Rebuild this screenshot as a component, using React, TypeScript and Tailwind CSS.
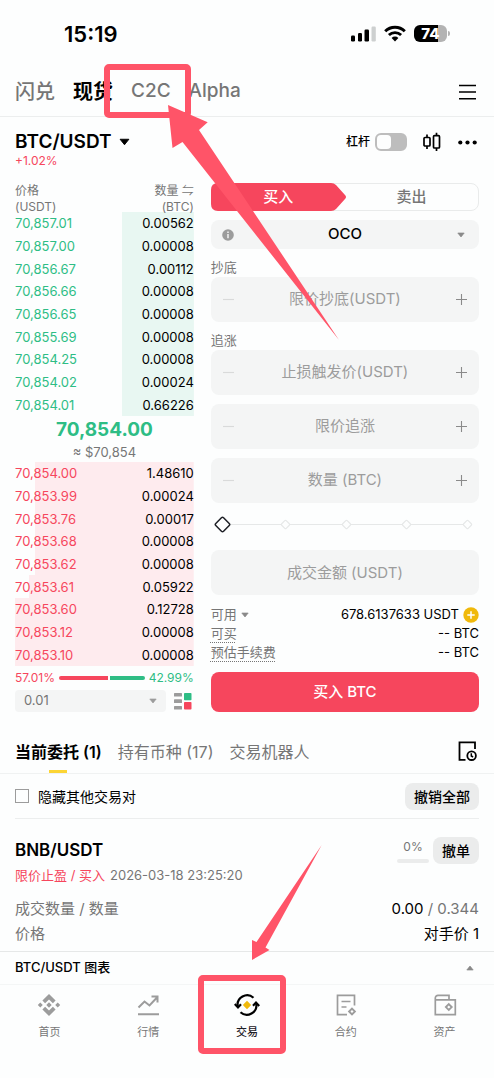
import type { ReactNode } from "react";

type Row = { price: string; amount: string; fill: number };

const upper: Row[] = [
  { price: "70,857.01", amount: "0.00562", fill: 40 },
  { price: "70,857.00", amount: "0.00008", fill: 40 },
  { price: "70,856.67", amount: "0.00112", fill: 40 },
  { price: "70,856.66", amount: "0.00008", fill: 40 },
  { price: "70,856.65", amount: "0.00008", fill: 40 },
  { price: "70,855.69", amount: "0.00008", fill: 40 },
  { price: "70,854.25", amount: "0.00008", fill: 40 },
  { price: "70,854.02", amount: "0.00024", fill: 40 },
  { price: "70,854.01", amount: "0.66226", fill: 40 },
];

const lower: Row[] = [
  { price: "70,854.00", amount: "1.48610", fill: 89 },
  { price: "70,853.99", amount: "0.00024", fill: 89 },
  { price: "70,853.76", amount: "0.00017", fill: 89 },
  { price: "70,853.68", amount: "0.00008", fill: 89 },
  { price: "70,853.62", amount: "0.00008", fill: 89 },
  { price: "70,853.61", amount: "0.05922", fill: 92 },
  { price: "70,853.60", amount: "0.12728", fill: 100 },
  { price: "70,853.12", amount: "0.00008", fill: 100 },
  { price: "70,853.10", amount: "0.00008", fill: 100 },
];

function Caret({ className }: { className: string }) {
  return (
    <svg viewBox="0 0 12 8" className={className} aria-hidden="true">
      <path d="M1.2 1h9.6L6 7z" fill="currentColor" stroke="currentColor" strokeWidth="1" strokeLinejoin="round" />
    </svg>
  );
}

function StatusBar() {
  return (
    <div className="flex h-[67px] items-center justify-between pr-11 pl-16">
      <span className="text-[22px] leading-6 font-semibold">15:19</span>
      <div className="flex items-center gap-2">
        <svg viewBox="0 0 25 17" className="h-[17px] w-[25px]" aria-hidden="true">
          <rect x="0" y="10.5" width="4" height="6" rx="1.2" />
          <rect x="7" y="8" width="4" height="8.5" rx="1.2" />
          <rect x="13.5" y="4.5" width="4.5" height="12" rx="1.2" />
          <rect x="20.5" y="1.5" width="4.3" height="15" rx="1.2" fill="#cdd0d0" />
        </svg>
        <svg viewBox="0 0 22 17" className="h-[17px] w-[22px]" aria-hidden="true">
          <path d="M1.2 6.2a14 14 0 0 1 19.6 0" fill="none" stroke="#000" strokeWidth="3" />
          <path d="M4.9 10a8.8 8.8 0 0 1 12.2 0" fill="none" stroke="#000" strokeWidth="2.8" />
          <path d="M11 16.6 7.6 13a4.8 4.8 0 0 1 6.8 0z" />
        </svg>
        <div className="flex items-center gap-px">
          <div className="flex h-[17px] w-[33px] items-center justify-center rounded-md bg-linear-to-r from-black from-74% to-[#b3b3b3] to-74% text-[15px] leading-4 font-extrabold text-white">
            74
          </div>
          <div className="h-[5px] w-0.5 rounded-r-full bg-[#b3b3b3]" />
        </div>
      </div>
    </div>
  );
}

function TopTabs() {
  return (
    <header className="flex h-[50px] items-center justify-between border-b border-[#eceeee] px-[15px]">
      <nav className="flex items-center gap-[18px] text-xl font-medium text-[#767676]">
        <a href="#convert">闪兑</a>
        <a href="#spot" className="font-bold text-black">现货</a>
        <a href="#c2c" className="text-[19px]">C2C</a>
        <a href="#alpha" className="text-[19px]">Alpha</a>
      </nav>
      <button type="button" aria-label="菜单" className="pr-[3px]">
        <svg viewBox="0 0 17 16" className="h-4 w-[17px]" aria-hidden="true">
          <path d="M0 1.5h17M0 8h17M0 14.7h17" stroke="#000" strokeWidth="1.6" />
        </svg>
      </button>
    </header>
  );
}

function PairHeader() {
  return (
    <div className="px-[15px] pt-3 pb-4">
      <div className="flex h-[26px] items-center justify-between">
        <button type="button" className="flex items-center gap-[7px] text-[19px] leading-6 font-semibold">
          BTC/USDT
          <Caret className="h-2 w-[11px]" />
        </button>
        <div className="flex items-center">
          <label htmlFor="margin" className="mr-[5px] text-[12px] leading-4 font-medium">杠杆</label>
          <input
            id="margin"
            type="checkbox"
            className="h-[18px] w-8 appearance-none rounded-md border-2 border-[#bdbdbd] bg-[#bdbdbd] before:block before:h-3.5 before:w-3.5 before:rounded before:bg-[#fdfefe]"
          />
          <button type="button" aria-label="K线" className="ml-4">
            <svg viewBox="0 0 18 20" className="h-5 w-[18px]" fill="none" stroke="#000" strokeWidth="1.7" aria-hidden="true">
              <path d="M4 2.500v3M4 14v3M13.500.8v3M13.500 16v3" />
              <rect x="1" y="5.500" width="6" height="8.500" rx="1" />
              <rect x="10.500" y="3.700" width="6" height="12.300" rx="1" />
            </svg>
          </button>
          <button type="button" aria-label="更多" className="ml-[17px] mr-[2px]">
            <svg viewBox="0 0 19 5" className="h-[5px] w-[19px]" aria-hidden="true">
              <circle cx="2.300" cy="2.500" r="2.100" />
              <circle cx="9.500" cy="2.500" r="2.100" />
              <circle cx="16.700" cy="2.500" r="2.100" />
            </svg>
          </button>
        </div>
      </div>
      <div className="text-[12px] leading-3 text-[#f6465d]">+1.02%</div>
    </div>
  );
}

function BookRows({ rows, priceClass, tint }: { rows: Row[]; priceClass: string; tint: string }) {
  return (
    <tbody>
      {rows.map((r) => (
        <tr
          key={r.price}
          style={{ background: `linear-gradient(to left, ${tint} ${r.fill}%, transparent ${r.fill}%)` }}
        >
          <td className={priceClass}>{r.price}</td>
          <td className="p-0 text-right">{r.amount}</td>
        </tr>
      ))}
    </tbody>
  );
}

function OrderBook() {
  return (
    <section>
      <table className="h-[233px] w-full text-[13px] leading-5">
        <thead>
          <tr className="h-[29px] text-[12px] leading-4 text-[#767676]">
            <th className="p-0 text-left font-normal">
              <div className="h-[29px]">价格<br />(USDT)</div>
            </th>
            <th className="p-0 text-right font-normal">
              <div className="h-[29px]">数量 ⇋<br />(BTC)</div>
            </th>
          </tr>
        </thead>
        <BookRows rows={upper} priceClass="p-0 text-[#2ebd85]" tint="#e8f7f2" />
      </table>
      <div className="flex h-[46px] flex-col items-center">
        <span className="text-[19px] leading-[27px] font-bold text-[#2ebd85]">70,854.00</span>
        <span className="text-[13px] leading-[19px] text-[#767676]">≈ $70,854</span>
      </div>
      <table className="h-[204px] w-full text-[13px] leading-5">
        <BookRows rows={lower} priceClass="p-0 text-[#f6465d]" tint="#feebee" />
      </table>
      <div className="flex h-6 items-center gap-1 text-[12px]">
        <span className="text-[#f6465d]">57.01%</span>
        <div className="flex h-1 flex-1 gap-0.5">
          <div className="rounded-l-full bg-[#f6465d]" style={{ width: "57.01%" }} />
          <div className="flex-1 rounded-r-full bg-[#2ebd85]" />
        </div>
        <span className="text-[#2ebd85]">42.99%</span>
      </div>
      <div className="flex h-[22px] items-center gap-2">
        <div className="relative flex-1">
          <select
            aria-label="价格精度"
            className="block h-[22px] w-full appearance-none rounded bg-[#f4f5f5] pl-[9px] text-[13px] text-[#767676]"
          >
            <option>0.01</option>
          </select>
          <Caret className="pointer-events-none absolute top-2 right-[9px] h-1.5 w-2 text-[#9c9c9c]" />
        </div>
        <button type="button" aria-label="盘口样式" className="mr-0.5">
          <svg viewBox="0 0 18 18" className="h-[18px] w-[18px]" aria-hidden="true">
            <rect x="0" y="1" width="8" height="3.500" rx=".6" fill="#9c9c9c" />
            <rect x="0" y="7.300" width="8" height="3.700" rx=".6" fill="#9c9c9c" />
            <rect x="0" y="14" width="8" height="3.500" rx=".6" fill="#9c9c9c" />
            <rect x="10" y="1" width="7.500" height="7.300" rx=".8" fill="#2ebd85" />
            <rect x="10" y="10" width="7.500" height="7.500" rx=".8" fill="#f6465d" />
          </svg>
        </button>
      </div>
    </section>
  );
}

function Stepper({ id, placeholder }: { id: string; placeholder: string }) {
  return (
    <div className="flex h-[45px] items-center rounded-lg bg-[#f4f5f5] px-3">
      <button type="button" aria-label="减少" className="text-[#d9dada]">
        <svg viewBox="0 0 11 11" className="h-[11px] w-[11px]" aria-hidden="true">
          <path d="M0 5.500h11" stroke="currentColor" strokeWidth="1.2" />
        </svg>
      </button>
      <input
        id={id}
        aria-label={placeholder}
        placeholder={placeholder}
        className="min-w-0 flex-1 bg-transparent text-center text-[15px] outline-none placeholder:text-[#9c9c9c]"
      />
      <button type="button" aria-label="增加" className="text-[#8a8a8a]">
        <svg viewBox="0 0 11 11" className="h-[11px] w-[11px]" aria-hidden="true">
          <path d="M0 5.500h11M5.500 0v11" stroke="currentColor" strokeWidth="1.1" />
        </svg>
      </button>
    </div>
  );
}

function AmountSlider() {
  return (
    <div className="relative mb-[5px] flex h-[42px] items-center justify-between pr-[6px] pl-[3px]">
      <div className="absolute inset-x-3 h-px bg-[#e6e8e8]" />
      <svg viewBox="0 0 17 17" className="relative h-[17px] w-[17px]" aria-hidden="true">
        <rect x="3" y="3" width="11" height="11" rx="1.500" transform="rotate(45 8.500 8.500)" fill="#fdfefe" stroke="#1e2026" strokeWidth="1.500" />
      </svg>
      {[25, 50, 75, 100].map((p) => (
        <svg key={p} viewBox="0 0 11 11" className="relative h-[11px] w-[11px]" aria-hidden="true">
          <rect x="2.300" y="2.300" width="6.400" height="6.400" rx="1" transform="rotate(45 5.500 5.500)" fill="#fdfefe" stroke="#e6e8e8" strokeWidth="1.200" />
        </svg>
      ))}
      <input type="range" aria-label="数量百分比" defaultValue={0} className="absolute inset-0 w-full opacity-0" />
    </div>
  );
}

function OrderForm() {
  return (
    <form className="flex flex-col">
      <div className="relative flex h-7 rounded-lg border border-[#e9ebeb]">
        <svg viewBox="0 0 135 28" preserveAspectRatio="none" className="absolute -top-px -left-px h-7 w-[135px]" aria-hidden="true">
          <path d="M7 0h113q3 0 5 2l9 10q2 2 0 4l-9 10q-2 2-5 2H7q-7 0-7-7V7q0-7 7-7z" fill="#f6465d" />
        </svg>
        <button type="button" className="relative flex-1 text-[15px] leading-6 font-medium text-white">买入</button>
        <button type="button" className="relative flex-1 text-[15px] leading-6 font-medium text-[#767676]">卖出</button>
      </div>
      <div className="relative mt-[9px]">
        <select
          aria-label="订单类型"
          className="block h-[29px] w-full appearance-none rounded-lg bg-[#f4f5f5] text-center text-[15px] font-medium [text-align-last:center]"
        >
          <option>OCO</option>
        </select>
        <svg viewBox="0 0 12 12" className="pointer-events-none absolute top-[9px] left-[11px] h-3 w-3" aria-hidden="true">
          <circle cx="6" cy="6" r="5.800" fill="#9c9c9c" />
          <path d="M6 2.500v1.500M6 5v4.300" stroke="#fff" strokeWidth="1.300" />
        </svg>
        <Caret className="pointer-events-none absolute top-3 right-3.5 h-1.5 w-2 text-[#8a8a8a]" />
      </div>
      <label htmlFor="limit-low" className="mt-[10px] mb-0.5 text-[13px] leading-4 text-[#767676]">抄底</label>
      <Stepper id="limit-low" placeholder="限价抄底(USDT)" />
      <label htmlFor="stop-trigger" className="mt-[10px] mb-0.5 text-[13px] leading-4 text-[#767676]">追涨</label>
      <div className="flex flex-col gap-[9px]">
        <Stepper id="stop-trigger" placeholder="止损触发价(USDT)" />
        <Stepper id="limit-high" placeholder="限价追涨" />
        <Stepper id="quantity" placeholder="数量 (BTC)" />
      </div>
      <AmountSlider />
      <input
        aria-label="成交金额 (USDT)"
        placeholder="成交金额 (USDT)"
        className="h-[45px] w-full rounded-lg bg-[#f4f5f5] text-center text-[15px] outline-none placeholder:text-[#9c9c9c]"
      />
      <dl className="mt-[10px] grid grid-cols-[auto_1fr] text-[13px] leading-[19px]">
        <dt className="flex items-center gap-1 text-[#767676]">
          可用
          <Caret className="h-1.5 w-2 text-[#8a8a8a]" />
        </dt>
        <dd className="flex items-center justify-end gap-1">
          678.6137633 USDT
          <button type="button" aria-label="充值">
            <svg viewBox="0 0 16 16" className="h-4 w-4" aria-hidden="true">
              <circle cx="8" cy="8" r="7.700" fill="#f0b90b" />
              <path d="M8 4.300v7.400M4.300 8h7.400" stroke="#fff" strokeWidth="1.500" />
            </svg>
          </button>
        </dd>
        <dt className="text-[#767676]">
          <span className="underline decoration-dotted decoration-1 underline-offset-4">可买</span>
        </dt>
        <dd className="text-right">-- BTC</dd>
        <dt className="text-[#767676]">
          <span className="underline decoration-dotted decoration-1 underline-offset-4">预估手续费</span>
        </dt>
        <dd className="text-right">-- BTC</dd>
      </dl>
      <button type="button" className="mt-[10px] h-10 rounded-lg bg-[#f6465d] text-[15px] font-medium text-white">
        买入 BTC
      </button>
    </form>
  );
}

function Orders() {
  return (
    <section>
      <div className="mt-[17px] flex h-[45px] items-center justify-between border-b border-[#f0f2f2] px-[15px]">
        <nav className="flex h-full gap-4 text-base text-[#767676]">
          <a href="#open" className="flex h-full flex-col items-center font-semibold text-black">
            <span className="flex-1 pt-[11px] leading-6">当前委托 (1)</span>
            <span className="h-[3px] w-[18px] bg-[#fcd535]" />
          </a>
          <a href="#holdings" className="pt-[11px] leading-6">持有币种 (17)</a>
          <a href="#bots" className="pt-[11px] leading-6">交易机器人</a>
        </nav>
        <button type="button" aria-label="历史委托" className="mr-0.5">
          <svg viewBox="0 0 19 20" className="h-5 w-[19px]" fill="none" stroke="#000" strokeWidth="1.800" aria-hidden="true">
            <path d="M17 8V1.300H1.500v17.500H7.500" />
            <circle cx="13.600" cy="14.700" r="4.300" />
            <path d="M13.300 12.300v2.700l1.800 1" strokeWidth="1.500" />
          </svg>
        </button>
      </div>
      <div className="px-[15px]">
        <div className="flex h-[45px] items-center justify-between border-b border-[#eceeee]">
          <label className="flex items-center gap-[9px] text-[14px]">
            <input type="checkbox" className="h-3.5 w-3.5 appearance-none border border-[#9c9c9c]" />
            隐藏其他交易对
          </label>
          <button type="button" className="h-[27px] rounded-lg bg-[#ebecec] px-[9px] text-[14px] font-medium">撤销全部</button>
        </div>
        <article className="pt-[18px]">
          <div className="flex h-[27px] items-center justify-between">
            <h2 className="text-[17px] font-semibold">BNB/USDT</h2>
            <div className="flex items-center gap-1">
              <div className="flex flex-col items-center gap-1 text-[12px] leading-4 text-[#767676]">
                0%
                <div className="h-1 w-8 rounded-full bg-[#ebecec]" />
              </div>
              <button type="button" className="h-[27px] rounded-lg bg-[#ebecec] px-[9px] text-[14px] font-medium">撤单</button>
            </div>
          </div>
          <p className="mt-0.5 flex gap-[5px] text-[13px] leading-[19px] text-[#767676]">
            <span className="text-[#f6465d]">限价止盈 / 买入</span>
            <time>2026-03-18 23:25:20</time>
          </p>
          <dl className="mt-[11px] grid grid-cols-2 pb-[5px] text-[15px] leading-[25px]">
            <dt className="text-[#767676]">成交数量 / 数量</dt>
            <dd className="text-right">0.00 <span className="text-[#767676]">/ 0.344</span></dd>
            <dt className="text-[#767676]">价格</dt>
            <dd className="text-right">对手价 1</dd>
          </dl>
        </article>
      </div>
    </section>
  );
}

function NavItem({ label, active, children }: { label: string; active?: boolean; children: ReactNode }) {
  return (
    <a href="#nav" className="flex flex-col items-center gap-[7px] text-[#9c9c9c]">
      <svg viewBox="0 0 26 24" className="h-6 w-[26px]" fill="none" stroke="currentColor" strokeWidth="1.700" aria-hidden="true">
        {children}
      </svg>
      <span className={active ? "text-[11px] leading-4 font-medium text-[#1e2026]" : "text-[11px] leading-4 text-[#767676]"}>
        {label}
      </span>
    </a>
  );
}

function BottomBar() {
  return (
    <footer>
      <button type="button" className="flex h-[33px] w-full items-center justify-between border-t border-[#e6e8e8] pr-5 pl-[15px] text-[13px] font-medium">
        BTC/USDT 图表
        <Caret className="h-1.5 w-2 rotate-180 text-[#8a8a8a]" />
      </button>
      <nav className="grid h-[94px] grid-cols-5 border-t border-[#f4f6f6] pt-2">
        <NavItem label="首页">
          <g fill="currentColor" stroke="none">
            <path d="M13 1l6.600 6.600-2.700 2.700L13 6.400l-3.900 3.900-2.700-2.700z" />
            <path d="M13 23l6.600-6.600-2.700-2.700-3.900 3.900-3.900-3.900-2.700 2.700z" />
            <path d="M13 9.300l2.700 2.700-2.700 2.700-2.700-2.700zM4.300 9.500l2.500 2.500-2.500 2.500L1.800 12zM21.700 9.500l2.500 2.500-2.500 2.500-2.500-2.500z" />
          </g>
        </NavItem>
        <NavItem label="行情">
          <path d="M3 21.300h21M3.500 14.500l6-6 5 4 7.500-8M16.500 3.500h6v6" strokeWidth="2" />
        </NavItem>
        <NavItem label="交易" active>
          <g stroke="#000" strokeWidth="2.200">
            <path d="M19.500 4.700A9.500 9.500 0 0 0 3.800 13.500" />
            <path d="M.8 11l3.200 3.500L7 11.300" />
            <path d="M6.500 19.300A9.500 9.500 0 0 0 22.200 10.500" />
            <path d="M25.200 13L22 9.500 19 12.700" />
          </g>
          <path d="M13 7.800l4.200 4.200-4.200 4.200L8.800 12z" fill="#f0b90b" stroke="none" />
        </NavItem>
        <NavItem label="合约">
          <path d="M21.500 12.500V2.300h-17v19.400h9.500M8.500 8.500h9M8.500 14h5" />
          <path d="M19 15.600l2.900 2.900-2.900 2.900-2.900-2.900z" strokeWidth="1.900" />
        </NavItem>
        <NavItem label="资产">
          <path d="M3.300 6.800h20v14.900h-20V5a2.700 2.700 0 0 1 2.700-2.700h11v4.500" />
          <path d="M16.800 11.200l2.900 2.900-2.900 2.900-2.900-2.900z" strokeWidth="1.900" />
        </NavItem>
      </nav>
    </footer>
  );
}

function Annotations() {
  return (
    <svg
      viewBox="0 0 494 1078"
      className="pointer-events-none absolute top-0 left-0 h-[1078px] w-[494px]"
      fill="none"
      stroke="#ff5468"
      strokeWidth="6"
      aria-hidden="true"
    >
      <rect x="107" y="67" width="81" height="48" rx="2" />
      <rect x="201" y="978" width="82" height="73" rx="2" />
      <g fill="#ff5468" stroke="none">
        <path d="M168 105l39.700 17.300-8.700 7.700L339 340 182.500 142l-10 6z" />
        <path d="M252 960v-20l4.500 2L321.700 845 265.500 947.500l4 2.500z" />
      </g>
    </svg>
  );
}

export default function App() {
  return (
    <div className="relative bg-[#fdfefe] font-['Inter','Noto_Sans_CJK_SC',sans-serif] text-black">
      <StatusBar />
      <TopTabs />
      <PairHeader />
      <main>
        <div className="grid grid-cols-[minmax(0,2fr)_minmax(0,3fr)] gap-[17px] px-[15px]">
          <OrderBook />
          <OrderForm />
        </div>
        <Orders />
      </main>
      <BottomBar />
      <Annotations />
    </div>
  );
}
